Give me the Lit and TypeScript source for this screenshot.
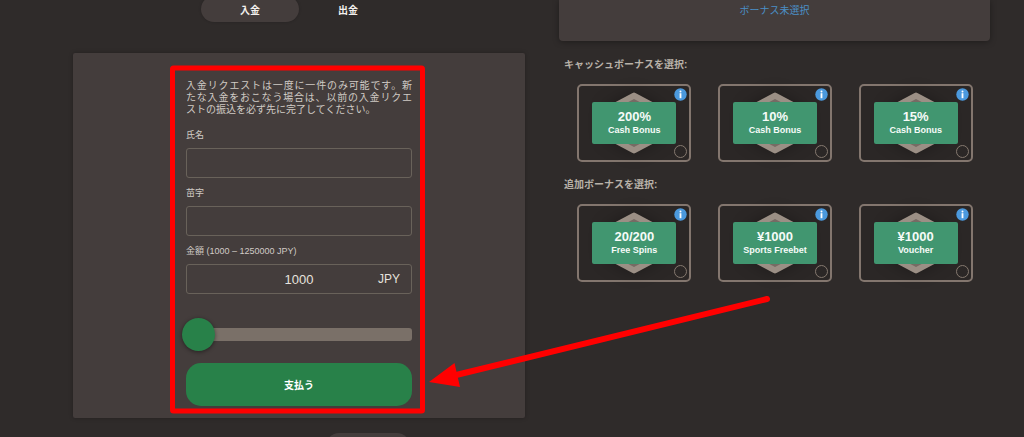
import { LitElement, html, css, svg } from "lit";
import { customElement, property, state } from "lit/decorators.js";

interface Bonus {
  id: string;
  value: string;
  label: string;
}

const CASH_BONUSES: Bonus[] = [
  { id: "cash-200", value: "200%", label: "Cash Bonus" },
  { id: "cash-10", value: "10%", label: "Cash Bonus" },
  { id: "cash-15", value: "15%", label: "Cash Bonus" },
];

const EXTRA_BONUSES: Bonus[] = [
  { id: "spins", value: "20/200", label: "Free Spins" },
  { id: "freebet", value: "¥1000", label: "Sports Freebet" },
  { id: "voucher", value: "¥1000", label: "Voucher" },
];

@customElement("bonus-picker")
class BonusPicker extends LitElement {
  @property() heading = "";
  @property() name = "";
  @property({ attribute: false }) items: Bonus[] = [];

  static styles = css`
    :host {
      display: block;
    }
    .group {
      border: 0;
      margin: 0;
      padding: 0;
      min-width: 0;
    }
    .heading {
      padding: 0;
      margin: 0 0 11px;
      font-size: 10px;
      line-height: 16px;
      font-weight: 700;
      color: #b8b1a8;
    }
    .row {
      display: grid;
      grid-template-columns: repeat(3, 1fr);
      justify-items: center;
    }
    .card {
      position: relative;
      box-sizing: border-box;
      display: grid;
      place-items: center;
      width: 114px;
      height: 78px;
      border: 2px solid #83766e;
      border-radius: 5px;
      background: #2b2726;
      cursor: pointer;
    }
    .hex {
      grid-area: 1 / 1;
      width: 56px;
      height: 62px;
      filter: drop-shadow(0 0 8px rgba(0, 0, 0, 0.3));
    }
    .banner {
      grid-area: 1 / 1;
      position: relative;
      display: flex;
      flex-direction: column;
      align-items: center;
      justify-content: center;
      width: 84px;
      height: 42px;
      border-radius: 2px;
      background: #419670;
      color: #f6fbf8;
      font-weight: 700;
    }
    .value {
      font-size: 13px;
      line-height: 14px;
    }
    .label {
      font-size: 9px;
      line-height: 12px;
      white-space: nowrap;
    }
    .info {
      position: absolute;
      top: 2px;
      right: 2px;
      width: 13px;
      height: 13px;
      padding: 0;
      border: 0;
      background: none;
      cursor: pointer;
    }
    .info svg {
      display: block;
    }
    .radio {
      appearance: none;
      position: absolute;
      right: 2px;
      bottom: 2px;
      box-sizing: border-box;
      width: 13px;
      height: 13px;
      margin: 0;
      border: 1px solid #85796f;
      border-radius: 50%;
    }
    .radio:checked {
      background: #419670;
    }
  `;

  render() {
    return html`
      <fieldset class="group">
        <legend class="heading">${this.heading}</legend>
        <div class="row">
          ${this.items.map(
            (b) => html`
              <label class="card">
                <svg class="hex" viewBox="0 0 56 62" aria-hidden="true">
                  <path
                    d="M28 3.6 L53 16.8 V45.200 L28 58.400 L3 45.200 V16.800 Z"
                    fill="#766b64"
                    stroke="#9b8f85"
                    stroke-width="6"
                    stroke-linejoin="round"
                  />
                </svg>
                <span class="banner">
                  <span class="value">${b.value}</span>
                  <span class="label">${b.label}</span>
                </span>
                <button class="info" type="button" aria-label="${b.value} ${b.label}">
                  <svg width="13" height="13" viewBox="0 0 13 13">
                    <circle cx="6.5" cy="6.5" r="6.2" fill="#4b99dd" />
                    <circle cx="6.5" cy="3.6" r="1" fill="#fff" />
                    <rect x="5.6" y="5.2" width="1.8" height="5" fill="#fff" />
                  </svg>
                </button>
                <input class="radio" type="radio" name=${this.name} value=${b.id} />
              </label>
            `
          )}
        </div>
      </fieldset>
    `;
  }
}

@customElement("deposit-form")
class DepositForm extends LitElement {
  @state() private amount = 1000;

  static styles = css`
    :host {
      display: block;
    }
    .form {
      display: flex;
      flex-direction: column;
      width: 50%;
      margin: 0 auto;
    }
    .notice {
      margin: 0 0 13px;
      font-size: 10px;
      line-height: 12px;
      color: #d0cbc5;
    }
    .line {
      display: block;
      white-space: nowrap;
    }
    .full {
      text-align: justify;
      text-align-last: justify;
    }
    .label {
      margin-bottom: 7px;
      font-size: 9px;
      line-height: 12px;
      color: #d0cbc5;
    }
    .field {
      position: relative;
      margin-bottom: 9px;
    }
    .input {
      display: block;
      box-sizing: border-box;
      width: 100%;
      height: 30px;
      padding: 0 12px;
      border: 1px solid #69625a;
      border-radius: 3px;
      background: transparent;
      color: #e6e2de;
      font: inherit;
      font-size: 13px;
      outline: none;
    }
    .amount {
      text-align: center;
    }
    .currency {
      position: absolute;
      top: 0;
      right: 12px;
      font-size: 12px;
      line-height: 30px;
      color: #e6e2de;
    }
    .range {
      appearance: none;
      width: 100%;
      height: 33px;
      margin: 15px 0 12px;
      background: none;
    }
    .range::-webkit-slider-runnable-track {
      height: 13px;
      border-radius: 3px;
      background: #7a7068;
    }
    .range::-webkit-slider-thumb {
      appearance: none;
      width: 33px;
      height: 33px;
      margin: -10px 0 0 -4px;
      border-radius: 50%;
      background: #288149;
      box-shadow: 0 1px 4px rgba(0, 0, 0, 0.45);
    }
    .pay {
      height: 43px;
      padding: 0;
      border: 0;
      border-radius: 15px;
      background: #288149;
      color: #fff;
      font: inherit;
      font-size: 10px;
      font-weight: 700;
      cursor: pointer;
    }
  `;

  private onAmount(e: Event) {
    this.amount = Number((e.target as HTMLInputElement).value);
  }

  render() {
    return html`
      <form class="form" @submit=${(e: Event) => e.preventDefault()}>
        <p class="notice">
          <span class="line full">入金リクエストは一度に一件のみ可能です。新</span>
          <span class="line full">たな入金をおこなう場合は、以前の入金リクエ</span>
          <span class="line">ストの振込を必ず先に完了してください。</span>
        </p>
        <label class="label" for="first">氏名</label>
        <div class="field"><input class="input" id="first" type="text" /></div>
        <label class="label" for="last">苗字</label>
        <div class="field"><input class="input" id="last" type="text" /></div>
        <label class="label" for="amount">金額 (1000 – 1250000 JPY)</label>
        <div class="field">
          <input
            class="input amount"
            id="amount"
            type="text"
            inputmode="numeric"
            .value=${String(this.amount)}
            @change=${this.onAmount}
          />
          <span class="currency">JPY</span>
        </div>
        <input
          class="range"
          type="range"
          aria-label="金額"
          min="1000"
          max="1250000"
          step="1000"
          .value=${String(this.amount)}
          @input=${this.onAmount}
        />
        <button class="pay" type="submit">支払う</button>
      </form>
    `;
  }
}

@customElement("app-root")
class AppRoot extends LitElement {
  static styles = css`
    :host {
      display: block;
      position: relative;
      height: 100vh;
      overflow: hidden;
      background: #2f2b2a;
      font-family: "Liberation Sans", "Noto Sans CJK JP", sans-serif;
    }
    .page {
      display: grid;
      grid-template-columns: 452fr 431fr;
      column-gap: 34px;
      align-items: start;
      padding: 0 34px 0 73px;
    }
    .tabs {
      display: flex;
      justify-content: center;
      margin: -4px 0 31px;
    }
    .tab {
      width: 98px;
      height: 26px;
      padding: 0;
      border: 0;
      border-radius: 13px;
      background: none;
      color: #f3f0ed;
      font: inherit;
      font-size: 10px;
      font-weight: 700;
      cursor: pointer;
    }
    .active {
      background: #443d3c;
      box-shadow: 0 0 3px rgba(0, 0, 0, 0.2);
    }
    .panel {
      padding: 27px 0 12px;
      border-radius: 2px;
      background: #443d3c;
      box-shadow: 0 0 4px rgba(0, 0, 0, 0.25);
    }
    .next {
      width: 84px;
      height: 26px;
      margin: 15px 0 0 56%;
      border-radius: 13px;
      background: #443d3c;
    }
    .summary {
      padding: 2px 0 22px;
      border-radius: 0 0 4px 4px;
      background: #443d3c;
      box-shadow: 0 1px 6px rgba(0, 0, 0, 0.35);
      text-align: center;
      font-size: 10px;
      line-height: 17px;
    }
    .link {
      color: #4b8fc7;
      text-decoration: none;
    }
    .pickers {
      display: grid;
      gap: 15px;
      padding: 16px 4px 0 5px;
    }
    .marks {
      position: absolute;
      top: 0;
      left: 0;
      width: 1024px;
      height: 437px;
      pointer-events: none;
    }
  `;

  private marks() {
    return svg`
      <rect x="172.5" y="68" width="250" height="343" rx="1" fill="none"
        stroke="#f00" stroke-width="5" stroke-linejoin="round" />
      <path d="M452 376 L767 299" stroke="#f00" stroke-width="6" stroke-linecap="round" />
      <path d="M429 382 L454.500 363 L460 387 Z" fill="#f00" />
    `;
  }

  render() {
    return html`
      <main class="page">
        <section>
          <nav class="tabs">
            <button class="tab active" type="button">入金</button>
            <button class="tab" type="button">出金</button>
          </nav>
          <div class="panel"><deposit-form></deposit-form></div>
          <div class="next"></div>
        </section>
        <section>
          <div class="summary"><a class="link" href="#">ボーナス未選択</a></div>
          <div class="pickers">
            <bonus-picker heading="キャッシュボーナスを選択:" name="cash" .items=${CASH_BONUSES}></bonus-picker>
            <bonus-picker heading="追加ボーナスを選択:" name="extra" .items=${EXTRA_BONUSES}></bonus-picker>
          </div>
        </section>
      </main>
      <svg class="marks" viewBox="0 0 1024 437" aria-hidden="true">${this.marks()}</svg>
    `;
  }
}
